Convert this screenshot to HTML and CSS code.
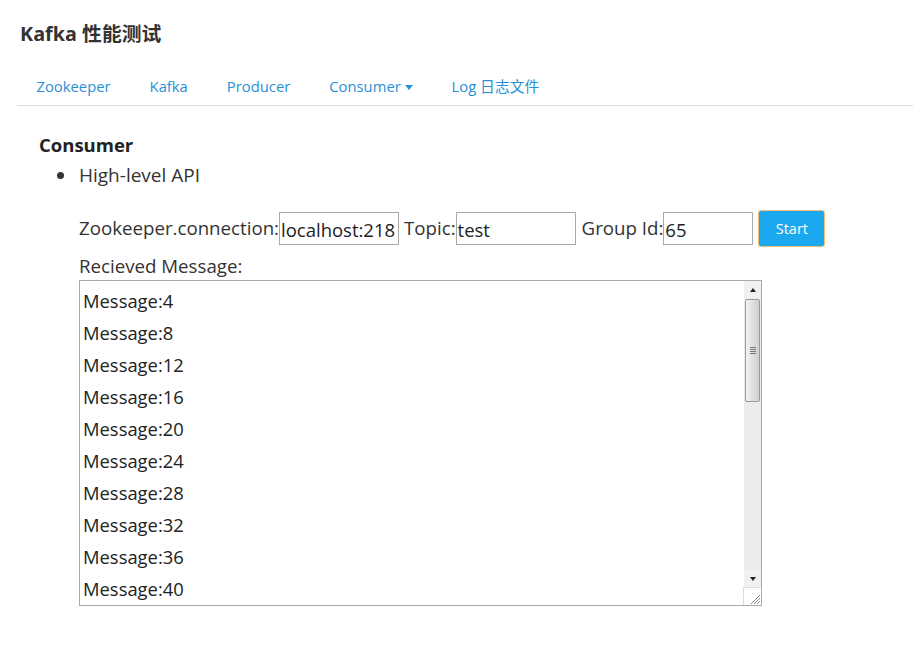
FILE: index.html
```html
<!DOCTYPE html>
<html>
<head>
<meta charset="utf-8">
<link rel="stylesheet" href="styles.css">
</head>
<body>
<header class="brand">Kafka 性能测试</header>
<nav class="tabs">
  <a class="tab">Zookeeper</a>
  <a class="tab">Kafka</a>
  <a class="tab">Producer</a>
  <a class="tab">Consumer <span class="caret"></span></a>
  <a class="tab">Log 日志文件</a>
</nav>
<main class="content">
  <h2 class="section-title">Consumer</h2>
  <ul class="api-list">
    <li>High-level API
      <div class="form-row">
        <label class="lbl">Zookeeper.connection:</label><span class="field w120">localhost:218</span>
        <label class="lbl sp">Topic:</label><span class="field w120">test</span>
        <label class="lbl sp2">Group Id:</label><span class="field w90">65</span>
        <button class="btn">Start</button>
      </div>
      <div class="recv-label">Recieved Message:</div>
      <div class="textbox">
        <div class="lines">
          <div>Message:4</div>
          <div>Message:8</div>
          <div>Message:12</div>
          <div>Message:16</div>
          <div>Message:20</div>
          <div>Message:24</div>
          <div>Message:28</div>
          <div>Message:32</div>
          <div>Message:36</div>
          <div>Message:40</div>
        </div>
        <div class="scrollbar">
          <div class="sb-btn"><span class="tri-up"></span></div>
          <div class="sb-track">
            <div class="sb-thumb"><span class="grip"></span></div>
          </div>
          <div class="sb-btn"><span class="tri-down"></span></div>
          <div class="sb-corner">
            <svg width="16" height="16" viewBox="0 0 16 16"><path d="M6 15 L15 6 M9 15 L15 9 M12 15 L15 12" stroke="#888" stroke-width="1" fill="none"/></svg>
          </div>
        </div>
      </div>
    </li>
  </ul>
</main>
</body>
</html>
```
FILE: styles.css
```css
html, body {
  margin: 0;
  padding: 0;
  background: #fff;
}
body {
  font-family: "Open Sans", "Noto Sans CJK SC", sans-serif;
  color: #333;
  width: 913px;
  height: 645px;
  overflow: hidden;
}
.brand {
  padding: 20px 0 0 20px;
  height: 30px;
  font-size: 19.8px;
  font-weight: bold;
  line-height: 28px;
  color: #333;
}
.tabs {
  display: flex;
  margin: 22px 0 0 17px;
  border-bottom: 1px solid #ddd;
  height: 33px;
}
.tab {
  padding: 0 19.5px;
  font-size: 14.8px;
  line-height: 29px;
  color: #2a90d6;
  cursor: pointer;
}
.caret {
  display: inline-block;
  width: 0;
  height: 0;
  border-left: 4.5px solid transparent;
  border-right: 4.5px solid transparent;
  border-top: 5px solid #2a90d6;
  vertical-align: middle;
  margin-left: 0;
  position: relative;
  top: -1px;
}
.content {
  padding: 27px 0 0 39px;
}
.section-title {
  margin: 0;
  font-size: 18.5px;
  font-weight: bold;
  line-height: 24px;
  color: #222;
}
.api-list {
  margin: 5px 0 0 0;
  padding: 0 0 0 40px;
  font-size: 19px;
  line-height: 26px;
  color: #333;
  list-style: none;
}
.api-list > li {
  position: relative;
}
.api-list > li::before {
  content: "";
  position: absolute;
  left: -22px;
  top: 10px;
  width: 7px;
  height: 7px;
  border-radius: 50%;
  background: #333;
}
.form-row {
  display: flex;
  align-items: center;
  margin-top: 22px;
  height: 37px;
}
.lbl {
  font-size: 18.7px;
  line-height: 33px;
  position: relative;
  top: -1px;
}
.sp { margin-left: 5px; }
.sp2 { margin-left: 6px; }
.field {
  box-sizing: border-box;
  height: 33px;
  border: 1px solid #a9a9a9;
  font-size: 18.5px;
  line-height: 34px;
  padding: 0 1px;
  overflow: hidden;
  white-space: nowrap;
  color: #222;
}
.w120 { width: 120px; }
.w90 { width: 90px; }
.btn {
  margin-left: 5px;
  box-sizing: border-box;
  width: 67px;
  height: 37px;
  background: #1ca8ee;
  border: 1px solid #f0c070;
  border-radius: 3px;
  color: #fff;
  font-family: "Open Sans", sans-serif;
  font-size: 14.5px;
  padding: 0;
}
.recv-label {
  margin-top: 8px;
  line-height: 22px;
  font-size: 18.7px;
}
.textbox {
  margin-top: 3px;
  box-sizing: border-box;
  width: 683px;
  height: 326px;
  border: 1px solid #a9a9a9;
  display: flex;
  overflow: hidden;
}
.lines {
  flex: 1;
  padding: 4px 0 0 3px;
  font-size: 18.4px;
  line-height: 32px;
  color: #222;
  overflow: hidden;
}
.scrollbar {
  width: 17px;
  display: flex;
  flex-direction: column;
  background: #f0f0f0;
}
.sb-btn {
  height: 17px;
  display: flex;
  align-items: center;
  justify-content: center;
  background: #f0f0f0;
}
.tri-up {
  width: 0; height: 0;
  border-left: 3.5px solid transparent;
  border-right: 3.5px solid transparent;
  border-bottom: 4px solid #222;
}
.tri-down {
  width: 0; height: 0;
  border-left: 3.5px solid transparent;
  border-right: 3.5px solid transparent;
  border-top: 4px solid #222;
}
.sb-track {
  flex: 1;
  background: #ececec;
  padding-top: 1px;
}
.sb-thumb {
  margin: 0 1px;
  height: 103px;
  box-sizing: border-box;
  border: 1px solid #9a9a9a;
  border-radius: 2px;
  background: linear-gradient(to right, #f4f4f4, #dcdcdc 60%, #cfcfcf);
  display: flex;
  align-items: center;
  justify-content: center;
}
.grip {
  width: 6px;
  height: 7px;
  background: repeating-linear-gradient(to bottom, #777 0 1px, transparent 1px 2px);
}
.sb-corner {
  height: 17px;
  background: #fff;
  border-top: 1px solid #ddd;
  border-left: 1px solid #ddd;
  margin-left: -1px;
  display: flex;
  align-items: flex-end;
  justify-content: flex-end;
}
```
